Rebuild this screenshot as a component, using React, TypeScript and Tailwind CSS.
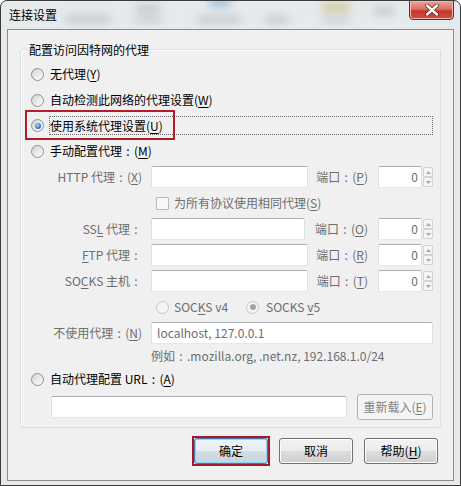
import React from "react";
import clsx from "clsx";

// underlined access key
function K({ children }: { children: React.ReactNode }) {
  return <span className="underline underline-offset-[2px]">{children}</span>;
}

// full-width colon, centred like the YaHei glyph
function C() {
  return <span className="inline-block w-[12px] text-center">:</span>;
}

function Radio({ checked, disabled }: { checked?: boolean; disabled?: boolean }) {
  return (
    <span
      className={clsx(
        "flex h-[13px] w-[13px] shrink-0 items-center justify-center rounded-full border",
        disabled
          ? "border-[#c8c8c8] bg-[#f4f4f4]"
          : "border-[#8e8f8f] bg-[linear-gradient(135deg,#d4d4d4,#fdfdfd)]"
      )}
    >
      {checked && (
        <span
          className={clsx(
            "h-[6px] w-[6px] rounded-full",
            disabled
              ? "bg-[#a4a4a4]"
              : "bg-[radial-gradient(circle_at_40%_35%,#9fdcff,#2a6ab8_70%,#173f7a)]"
          )}
        />
      )}
    </span>
  );
}

function Box({ w, h = "h-[22px]", children }: { w: string; h?: string; children?: React.ReactNode }) {
  return (
    <div
      className={clsx(
        "flex shrink-0 items-center rounded-[2px] border border-t-[#abadb3] border-x-[#dbdfe6] border-b-[#e3e9ef] bg-white",
        w,
        h
      )}
    >
      {children}
    </div>
  );
}

function Port() {
  return (
    <div className="flex shrink-0 items-center">
      <Box w="w-[44px]">
        <span className="ml-auto pr-[3px] text-[#6d6d6d]">0</span>
      </Box>
      <div className="ml-[1px] flex h-[20px] w-[10px] flex-col">
        {["up", "down"].map((d) => (
          <div
            key={d}
            className="flex flex-1 items-center justify-center rounded-[1px] border border-[#d3d3d3] bg-[#f4f4f4]"
          >
            <svg width="5" height="3" viewBox="0 0 5 3">
              <path d={d === "up" ? "M0 3 L2.5 0 L5 3 Z" : "M0 0 L2.5 3 L5 0 Z"} fill="#a8a8a8" />
            </svg>
          </div>
        ))}
      </div>
    </div>
  );
}

function ProxyRow({ label, boxW, port }: { label: React.ReactNode; boxW: string; port: React.ReactNode }) {
  return (
    <div className="flex h-[26px] items-center pr-[7px] text-[#6d6d6d]">
      <div className="w-[121px] shrink-0 text-right">{label}</div>
      <div className="ml-[9px]">
        <Box w={boxW} />
      </div>
      <div className="flex-1 pr-[10px] text-right">{port}</div>
      <Port />
    </div>
  );
}

function Btn({ children, isDefault }: { children: React.ReactNode; isDefault?: boolean }) {
  return (
    <div
      className={clsx(
        "relative flex h-[26px] w-[74px] items-center justify-center rounded-[3px] border",
        isDefault
          ? "border-[#3c7fb1] bg-[linear-gradient(#eef3f7_0%,#e6edf3_50%,#d3dde6_51%,#c9d4de_100%)] shadow-[inset_0_0_0_1px_#8fd6f5]"
          : "border-[#707070] bg-[linear-gradient(#f2f2f2_0%,#ebebeb_50%,#dddddd_51%,#cfcfcf_100%)] shadow-[inset_0_0_0_1px_#fcfcfc]"
      )}
    >
      {children}
    </div>
  );
}

export default function App() {
  return (
    <div className="relative h-[486px] w-[461px] overflow-hidden rounded-t-[7px] border border-[#3b3b3b] bg-[#e7eaed] font-['Noto_Sans_CJK_SC',sans-serif] text-[12px] leading-none text-black">
      {/* blurred stuff behind the glass */}
      <div className="pointer-events-none absolute inset-x-0 top-0 h-[28px] blur-[4px]">
        <div className="absolute left-[64px] top-[14px] h-[8px] w-[46px] rounded-full bg-[#c5c9cd]" />
        <div className="absolute left-[134px] top-[4px] h-[7px] w-[26px] rounded-full bg-[#bfc4c8]" />
        <div className="absolute left-[134px] top-[15px] h-[7px] w-[26px] rounded-full bg-[#c8ccd0]" />
        <div className="absolute left-[196px] top-[15px] h-[7px] w-[44px] rounded-full bg-[#c3c7cb]" />
        <div className="absolute left-[208px] top-[-2px] h-[7px] w-[22px] rounded-full bg-[#8fb3d8]" />
        <div className="absolute left-[264px] top-[15px] h-[7px] w-[24px] rounded-full bg-[#c3c7cb]" />
        <div className="absolute left-[320px] top-[2px] h-[9px] w-[30px] rounded-full bg-[#d2ca9a]" />
        <div className="absolute left-[322px] top-[16px] h-[6px] w-[26px] rounded-full bg-[#c8ccd0]" />
        <div className="absolute left-[372px] top-[6px] h-[8px] w-[22px] rounded-full bg-[#c6cacd]" />
      </div>

      <div className="relative flex h-[28px] items-center pl-[8px] text-[12px]">连接设置</div>

      <div className="absolute right-[6px] top-[-1px] flex h-[20px] w-[45px] items-center justify-center rounded-b-[4px] border border-[#6b2a24] bg-[linear-gradient(#eba395_0%,#dc7262_45%,#c8352a_55%,#d0513f_100%)] shadow-[inset_0_0_0_1px_#f1b7ab]">
        <svg width="14" height="12" viewBox="0 0 14 12">
          <path d="M2 1.5 L12 10.5 M12 1.5 L2 10.5" stroke="#5a2a25" strokeWidth="4" strokeLinecap="round" />
          <path d="M2 1.5 L12 10.5 M12 1.5 L2 10.5" stroke="#ffffff" strokeWidth="2.4" strokeLinecap="round" />
        </svg>
      </div>

      <div className="relative mx-[6px] h-[452px] border border-[#8a8d90] bg-[#f0f0f0]">
        {/* group box */}
        <div className="relative mx-[12px] mt-[19px] rounded-[3px] border border-[#d5dfe5] pb-[5px] pt-[11px] shadow-[inset_1px_1px_0_#ffffff]">
          <div className="absolute left-[7px] top-[-8px] flex h-[16px] items-center bg-[#f0f0f0] px-[1px]">
            配置访问因特网的代理
          </div>

          <div className="flex h-[26px] items-center gap-[6px] pl-[10px]">
            <Radio />
            <span>
              无代理(<K>Y</K>)
            </span>
          </div>
          <div className="flex h-[26px] items-center gap-[6px] pl-[10px]">
            <Radio />
            <span>
              自动检测此网络的代理设置(<K>W</K>)
            </span>
          </div>
          <div className="relative flex h-[25px] items-center gap-[5px] pl-[10px] pr-[7px]">
            <Radio checked />
            <div className="flex h-[19px] flex-1 items-center border border-dotted border-[#6a6a6a]">
              使用系统代理设置(<K>U</K>)
            </div>
            <div className="pointer-events-none absolute left-[4px] top-[-3px] h-[30px] w-[150px] border-2 border-[#b01e2c]" />
          </div>
          <div className="flex h-[26px] items-center gap-[6px] pl-[10px]">
            <Radio />
            <span>
              手动配置代理<C />(<K>M</K>)
            </span>
          </div>

          <ProxyRow
            label={
              <>
                HTTP 代理<C />(<K>X</K>)
              </>
            }
            boxW="w-[157px]"
            port={
              <>
                端口<C />(<K>P</K>)
              </>
            }
          />
          <div className="flex h-[26px] items-center gap-[5px] pl-[135px] text-[#6d6d6d]">
            <span className="h-[13px] w-[13px] shrink-0 rounded-[1px] border border-[#b9b9b9] bg-[#f7f7f7]" />
            <span>
              为所有协议使用相同代理(<K>S</K>)
            </span>
          </div>
          <ProxyRow
            label={
              <>
                SS<K>L</K> 代理<C />
              </>
            }
            boxW="w-[154px]"
            port={
              <>
                端口<C />(<K>O</K>)
              </>
            }
          />
          <ProxyRow
            label={
              <>
                <K>F</K>TP 代理<C />
              </>
            }
            boxW="w-[157px]"
            port={
              <>
                端口<C />(<K>R</K>)
              </>
            }
          />
          <ProxyRow
            label={
              <>
                SO<K>C</K>KS 主机<C />
              </>
            }
            boxW="w-[157px]"
            port={
              <>
                端口<C />(<K>T</K>)
              </>
            }
          />

          <div className="flex h-[26px] items-center pl-[135px] text-[#6d6d6d]">
            <div className="flex w-[90px] items-center gap-[5px]">
              <Radio disabled />
              <span>
                SOC<K>K</K>S v4
              </span>
            </div>
            <div className="flex items-center gap-[7px]">
              <Radio disabled checked />
              <span>
                SOCKS <K>v</K>5
              </span>
            </div>
          </div>

          <div className="flex h-[26px] items-center text-[#6d6d6d]">
            <div className="w-[121px] shrink-0 text-right">
              不使用代理<C />(<K>N</K>)
            </div>
            <div className="ml-[9px]">
              <Box w="w-[282px]">
                <span className="pl-[5px]">localhost, 127.0.0.1</span>
              </Box>
            </div>
          </div>
          <div className="flex h-[20px] items-center pl-[130px] text-[#6d6d6d]">
            例如<C />.mozilla.org, .net.nz, 192.168.1.0/24
          </div>

          <div className="flex h-[26px] items-center gap-[6px] pl-[10px]">
            <Radio />
            <span>
              自动代理配置 URL<C />(<K>A</K>)
            </span>
          </div>
          <div className="flex h-[30px] items-center pl-[30px]">
            <Box w="w-[296px]" />
            <div className="ml-[10px] flex h-[26px] w-[76px] items-center justify-center rounded-[3px] border border-[#adb2b5] bg-[#f4f4f4] text-[#838383]">
              重新载入(<K>E</K>)
            </div>
          </div>
        </div>

        <div className="mt-[10px] flex justify-end gap-[11px] pr-[15px]">
          <div className="relative">
            <Btn isDefault>确定</Btn>
            <div className="pointer-events-none absolute -inset-[2px] border-2 border-[#a8182a]" />
          </div>
          <Btn>取消</Btn>
          <Btn>
            帮助(<K>H</K>)
          </Btn>
        </div>
      </div>
    </div>
  );
}
